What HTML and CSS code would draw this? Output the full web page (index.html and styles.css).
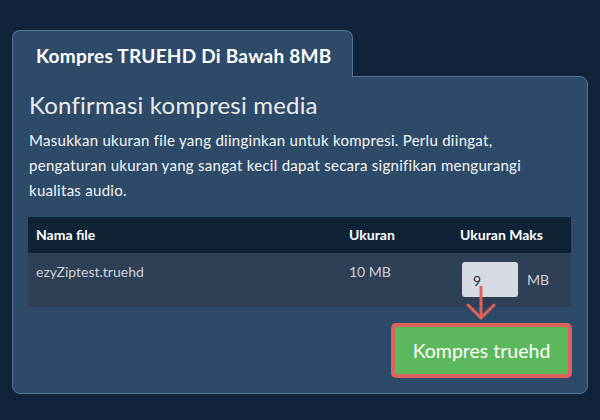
FILE: index.html
```html
<!DOCTYPE html>
<html lang="id">
<head>
<meta charset="utf-8">
<title>Kompres TRUEHD</title>
<link rel="stylesheet" href="styles.css">
</head>
<body>
<div class="wrap">
  <div class="tab">Kompres TRUEHD Di Bawah 8MB</div>
  <div class="panel">
    <h1 class="title">Konfirmasi kompresi media</h1>
    <p class="desc">Masukkan ukuran file yang diinginkan untuk kompresi. Perlu diingat, pengaturan ukuran yang sangat kecil dapat secara signifikan mengurangi kualitas audio.</p>
    <table class="files">
      <thead>
        <tr><th class="c1">Nama file</th><th class="c2">Ukuran</th><th class="c3">Ukuran Maks</th></tr>
      </thead>
      <tbody>
        <tr>
          <td class="c1">ezyZiptest.truehd</td>
          <td class="c2">10 MB</td>
          <td class="c3"><div class="maxcell"><span class="input">9</span><span class="unit">MB</span></div></td>
        </tr>
      </tbody>
    </table>
    <div class="actions"><button class="btn">Kompres truehd</button></div>
    <svg class="arrow" width="30" height="40" viewBox="0 0 30 40"><line x1="15" y1="3" x2="15" y2="35" stroke="#e0605a" stroke-width="3"/><polyline points="2,22 15,35 28,22" fill="none" stroke="#e0605a" stroke-width="3" stroke-linecap="round"/></svg>
  </div>
</div>
</body>
</html>
```
FILE: styles.css
```css
html, body { margin: 0; padding: 0; }
body {
  background: #11233a;
  font-family: Lato, "Open Sans", sans-serif;
  width: 600px;
  height: 420px;
  overflow: hidden;
}
.wrap {
  padding: 30px 0 0 12px;
  width: 576px;
}
.tab {
  position: relative;
  z-index: 1;
  box-sizing: border-box;
  width: 341px;
  background: #2d4a69;
  border: 1px solid #58739a;
  border-bottom: none;
  border-radius: 8px 8px 0 0;
  padding: 14px 0 10px 23px;
  margin-bottom: -1px;
  color: #ffffff;
  font-weight: 700;
  font-size: 19px;
  letter-spacing: 0.25px;
  line-height: 22px;
  white-space: nowrap;
}
.panel {
  position: relative;
  background: #2d4a69;
  border: 1px solid #58739a;
  border-radius: 0 8px 8px 8px;
  padding: 14px 15px 15px 15px;
}
.title {
  margin: 0;
  font-weight: 400;
  font-size: 24px;
  letter-spacing: 0.2px;
  line-height: 28px;
  color: #ececec;
  padding-left: 1px;
}
.desc {
  margin: 9px 0 0 1px;
  max-width: 530px;
  font-size: 15px;
  letter-spacing: 0.28px;
  line-height: 25px;
  color: #f6f6f6;
}
.files {
  margin-top: 14px;
  width: 543px;
  border-collapse: collapse;
  table-layout: fixed;
  font-size: 14px;
  line-height: 20px;
}
.files th {
  background: #0f2236;
  color: #ffffff;
  font-weight: 700;
  text-align: left;
  padding: 8px;
}
.files td {
  background: #2f3f55;
  color: #cdd1d8;
  vertical-align: top;
  padding: 9px 8px 10px 8px;
}
.c1 { width: 297px; }
.c2 { width: 95px; }
.c3 { width: 103px; }
.maxcell {
  display: flex;
  align-items: center;
  gap: 9px;
}
.input {
  display: block;
  width: 45px;
  height: 35px;
  margin-left: 2px;
  padding-left: 11px;
  background: #d6dbe3;
  border-radius: 3px;
  color: #222a33;
  line-height: 37px;
}
.unit { color: #cdd1d8; }
.actions {
  display: flex;
  justify-content: flex-end;
  margin-top: 16px;
}
.btn {
  font-family: Lato, "Open Sans", sans-serif;
  font-size: 19.5px;
  line-height: 47px;
  height: 55px;
  width: 181px;
  padding: 0;
  text-align: center;
  white-space: nowrap;
  color: #ffffff;
  background: #5cb85c;
  border: 4px solid #dc625c;
  border-radius: 5px;
}
.arrow {
  position: absolute;
  left: 453px;
  top: 206px;
}
```
